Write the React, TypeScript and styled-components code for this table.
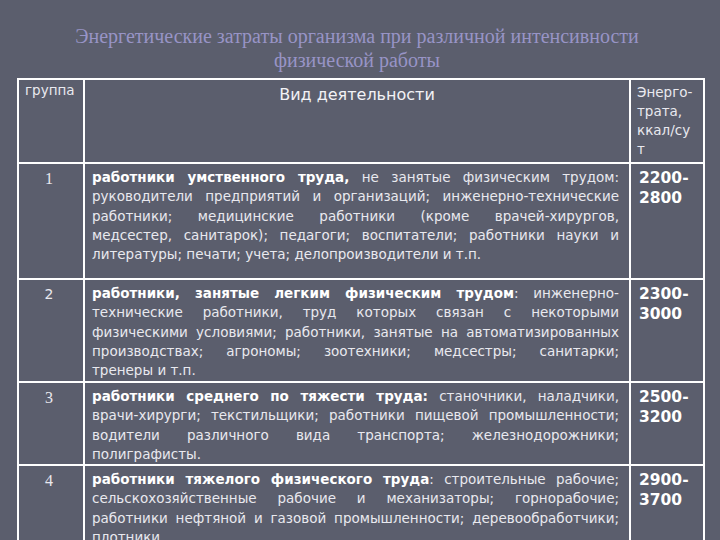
import { FC, ReactNode } from "react";
import styled, { createGlobalStyle } from "styled-components";

const GlobalStyle = createGlobalStyle`
  html, body {
    margin: 0;
    padding: 0;
    background: #5b5e6d;
  }
`;

// Styled Components
const Page = styled.div`
  width: 720px;
  height: 540px;
  overflow: hidden;
  background: #5b5e6d;
  padding-top: 24px;
  box-sizing: border-box;
`;

const Title = styled.h1`
  margin: 0;
  font-family: "Liberation Serif", "DejaVu Serif", serif;
  font-weight: normal;
  font-size: 20px;
  line-height: 24px;
  color: #9894c6;
  text-align: center;
  padding-right: 6px;
`;

const Table = styled.table`
  margin: 6px 0 0 17px;
  width: 686px;
  border-collapse: collapse;
  border: 2px solid #ffffff;
  table-layout: fixed;
  font-family: "DejaVu Sans", Verdana, sans-serif;
  color: #e9e9ef;
`;

const Row = styled.tr<{ $h: number }>`
  height: ${(p) => p.$h}px;
  border-top: 2px solid #ffffff;
`;

const Cell = styled.td`
  border-left: 2px solid #ffffff;
  vertical-align: top;
  padding: 0;
`;

const GroupHead = styled(Cell)`
  font-size: 13.5px;
  padding: 2px 6px 0;
`;

const ActivityHead = styled(Cell)`
  font-size: 16px;
  text-align: center;
  padding-top: 5px;
  color: #f2f2f6;
`;

const EnergyHead = styled(Cell)`
  font-size: 13.5px;
  line-height: 19px;
  padding: 3px 4px 0 6px;
`;

const Num = styled(Cell)<{ $sans?: boolean }>`
  text-align: center;
  font-family: ${(p) =>
    p.$sans ? `"DejaVu Sans", sans-serif` : `"Liberation Serif", serif`};
  font-size: ${(p) => (p.$sans ? "14px" : "16px")};
  padding-top: 6px;
  padding-right: 4px;
`;

const Text = styled(Cell)`
  font-size: 13.5px;
  line-height: 19.3px;
  padding: 4px 10px 0 7px;

  b {
    color: #ffffff;
  }
`;

const Line = styled.span<{ $last?: boolean }>`
  display: block;
  white-space: nowrap;
  text-align: ${(p) => (p.$last ? "left" : "justify")};
  text-align-last: ${(p) => (p.$last ? "left" : "justify")};
`;

const Value = styled(Cell)`
  font-weight: bold;
  font-size: 15.5px;
  line-height: 20px;
  color: #ffffff;
  padding: 4px 0 0 8px;
`;

interface RowData {
  num: string;
  sans?: boolean;
  h: number;
  lines: ReactNode[];
  value: [string, string];
}

const rows: RowData[] = [
  {
    num: "1",
    h: 116,
    lines: [
      <>
        <b>работники умственного труда,</b> не занятые физическим трудом:
      </>,
      "руководители предприятий и организаций; инженерно-технические",
      "работники; медицинские работники (кроме врачей-хирургов,",
      "медсестер, санитарок); педагоги; воспитатели; работники науки и",
      "литературы; печати; учета; делопроизводители и т.п.",
    ],
    value: ["2200-", "2800"],
  },
  {
    num: "2",
    sans: true,
    h: 103,
    lines: [
      <>
        <b>работники, занятые легким физическим трудом</b>: инженерно-
      </>,
      "технические работники, труд которых связан с некоторыми",
      "физическими условиями; работники, занятые на автоматизированных",
      "производствах; агрономы; зоотехники; медсестры; санитарки;",
      "тренеры и т.п.",
    ],
    value: ["2300-", "3000"],
  },
  {
    num: "3",
    h: 82,
    lines: [
      <>
        <b>работники среднего по тяжести труда:</b> станочники, наладчики,
      </>,
      "врачи-хирурги; текстильщики; работники пищевой промышленности;",
      "водители различного вида транспорта; железнодорожники;",
      "полиграфисты.",
    ],
    value: ["2500-", "3200"],
  },
  {
    num: "4",
    h: 100,
    lines: [
      <>
        <b>работники тяжелого физического труда</b>: строительные рабочие;
      </>,
      "сельскохозяйственные рабочие и механизаторы; горнорабочие;",
      "работники нефтяной и газовой промышленности; деревообработчики;",
      "плотники",
    ],
    value: ["2900-", "3700"],
  },
];

// Component
const App: FC = () => {
  return (
    <Page>
      <GlobalStyle />
      <Title>
        Энергетические затраты организма при различной интенсивности
        <br />
        физической работы
      </Title>
      <Table>
        <colgroup>
          <col style={{ width: 66 }} />
          <col style={{ width: 546 }} />
          <col style={{ width: 74 }} />
        </colgroup>
        <tbody>
          <Row $h={84}>
            <GroupHead>группа</GroupHead>
            <ActivityHead>Вид деятельности</ActivityHead>
            <EnergyHead>
              Энерго-
              <br />
              трата,
              <br />
              ккал/су
              <br />т
            </EnergyHead>
          </Row>
          {rows.map((row) => (
            <Row key={row.num} $h={row.h}>
              <Num $sans={row.sans}>{row.num}</Num>
              <Text>
                {row.lines.map((line, i) => (
                  <Line key={i} $last={i === row.lines.length - 1}>
                    {line}
                  </Line>
                ))}
              </Text>
              <Value>
                {row.value[0]}
                <br />
                {row.value[1]}
              </Value>
            </Row>
          ))}
        </tbody>
      </Table>
    </Page>
  );
};

export default App;
